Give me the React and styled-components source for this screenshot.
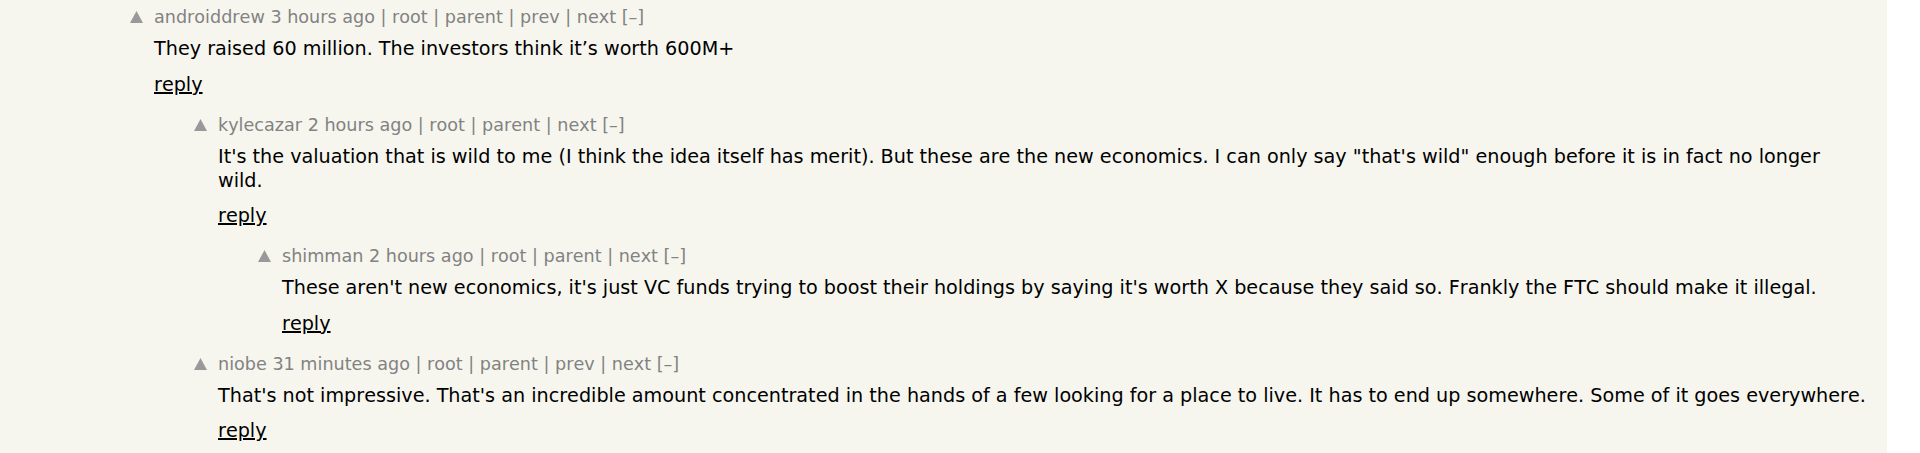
import React from "react";
import styled, { createGlobalStyle } from "styled-components";

const Global = createGlobalStyle`
  html, body { margin: 0; padding: 0; background: #ffffff; }
  body { font-family: Verdana, "DejaVu Sans", sans-serif; font-kerning: none; }
`;

const Page = styled.div`
  width: 1887px;
  min-height: 453px;
  background: #f6f6ef;
  padding: 7.4px 20px 0 0;
  box-sizing: border-box;
`;

const Comment = styled.div`
  display: flex;
  align-items: flex-start;
  padding-left: ${(p) => 130 + p.$level * 64}px;
  padding-bottom: 17.8px;
`;

const VoteCell = styled.div`
  width: 24px;
  flex-shrink: 0;
  padding-top: 4px;
  display: flex;
`;

const Content = styled.div`
  flex: 1;
  min-width: 0;
`;

const Meta = styled.div`
  font-size: 17.6px;
  line-height: 20px;
  color: #828282;
  white-space: nowrap;
`;

const MetaLink = styled.a`
  color: #828282;
  text-decoration: none;
`;

const Body = styled.div`
  margin-top: 10px;
  font-size: 19.2px;
  line-height: 24px;
  color: #000000;
`;

const Reply = styled.div`
  margin-top: 11.6px;
  font-size: 19.2px;
  line-height: 24px;
`;

const ReplyLink = styled.a`
  color: #000000;
  text-decoration: underline;
  text-decoration-thickness: 2px;
`;

const Arrow = () => (
  <svg width="13" height="12" viewBox="0 0 13 12" aria-hidden="true">
    <path d="M6.5 0 L13 12 L0 12 Z" fill="#999999" />
  </svg>
);

const comments = [
  {
    level: 0,
    user: "androiddrew",
    age: "3 hours ago",
    links: ["root", "parent", "prev", "next"],
    text: "They raised 60 million. The investors think it\u2019s worth 600M+",
  },
  {
    level: 1,
    user: "kylecazar",
    age: "2 hours ago",
    links: ["root", "parent", "next"],
    text:
      "It's the valuation that is wild to me (I think the idea itself has merit). But these are the new economics. I can only say \"that's wild\" enough before it is in fact no longer wild.",
  },
  {
    level: 2,
    user: "shimman",
    age: "2 hours ago",
    links: ["root", "parent", "next"],
    text:
      "These aren't new economics, it's just VC funds trying to boost their holdings by saying it's worth X because they said so. Frankly the FTC should make it illegal.",
  },
  {
    level: 1,
    user: "niobe",
    age: "31 minutes ago",
    links: ["root", "parent", "prev", "next"],
    text:
      "That's not impressive. That's an incredible amount concentrated in the hands of a few looking for a place to live. It has to end up somewhere. Some of it goes everywhere.",
  },
];

export default function App() {
  return (
    <>
      <Global />
      <Page>
        {comments.map((c) => (
          <Comment key={c.user} $level={c.level}>
            <VoteCell>
              <Arrow />
            </VoteCell>
            <Content>
              <Meta>
                <MetaLink href="#">{c.user}</MetaLink>{" "}
                <MetaLink href="#">{c.age}</MetaLink>
                {c.links.map((l) => (
                  <React.Fragment key={l}>
                    {" | "}
                    <MetaLink href="#">{l}</MetaLink>
                  </React.Fragment>
                ))}{" "}
                <MetaLink href="#">[–]</MetaLink>
              </Meta>
              <Body>{c.text}</Body>
              <Reply>
                <ReplyLink href="#">reply</ReplyLink>
              </Reply>
            </Content>
          </Comment>
        ))}
      </Page>
    </>
  );
}
